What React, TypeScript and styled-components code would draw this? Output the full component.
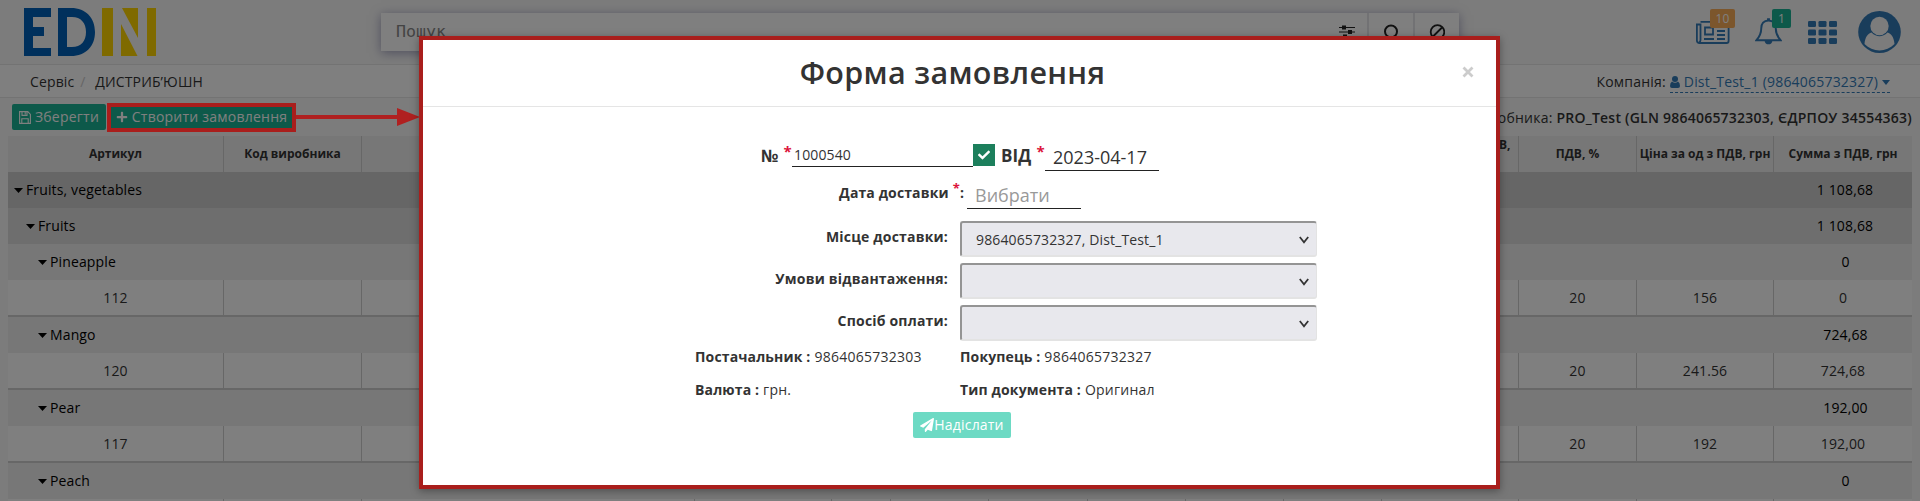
import React from "react";
import styled, { createGlobalStyle, css } from "styled-components";
import { FaPlus, FaUser, FaPaperPlane, FaCheck } from "react-icons/fa";

const Global = createGlobalStyle`
  * { box-sizing: border-box; }
  html, body { margin: 0; height: 501px; overflow: hidden; }
  body { font-family: "Open Sans", "Noto Sans", sans-serif; font-size: 14px; line-height: 20px; letter-spacing: 0.13px; color: #333; background: #f8f8f8; }
`;

const Page = styled.div`
  position: relative;
  width: 1920px;
  height: 501px;
  overflow: hidden;
`;

const Header = styled.header`
  display: flex;
  align-items: flex-start;
  height: 65px;
  border-bottom: 1px solid #e7e7e7;
`;

const Logo = styled.svg`
  flex: none;
  margin: 8px 0 0 24px;
`;

const Search = styled.div`
  display: flex;
  width: 1078px;
  height: 38px;
  margin: 13px 0 0 225px;
  background: #fff;
  box-shadow: 0 2px 10px rgba(90, 90, 140, 0.55);
`;

const SearchText = styled.div`
  flex: 1;
  padding: 9px 15px;
  font-family: "DejaVu Sans Mono", monospace;
  font-size: 16.6px;
  letter-spacing: 0;
  color: #888;
`;

const SearchButton = styled.div<{ $w: number; $line?: boolean }>`
  display: flex;
  align-items: center;
  justify-content: center;
  width: ${(p) => p.$w}px;
  border-left: ${(p) => (p.$line ? "2px solid #e4e4e8" : "0")};
`;

const Tools = styled.div`
  display: flex;
  margin-left: 237px;
  color: #337ab7;
`;

const Tool = styled.div<{ $w: number; $top: number }>`
  position: relative;
  width: ${(p) => p.$w}px;
  padding-top: ${(p) => p.$top}px;
  svg { display: block; }
`;

const Badge = styled.span<{ $bg: string; $left: number; $w: number }>`
  position: absolute;
  top: 9px;
  left: ${(p) => p.$left}px;
  width: ${(p) => p.$w}px;
  height: 19px;
  border-radius: 2px;
  background: ${(p) => p.$bg};
  color: #fff;
  font-size: 12px;
  line-height: 19px;
  text-align: center;
`;

const Crumbs = styled.nav`
  display: flex;
  justify-content: space-between;
  height: 33px;
  padding: 7px 30px 0 30px;
  background: #fff;
  border-bottom: 1px solid #e7e7e7;
`;

const Slash = styled.span`
  padding: 0 6px 0 6px;
  color: #ccc;
`;

const Company = styled.span`
  display: flex;
  gap: 4px;
  letter-spacing: 0.2px;
`;

const CompanyLink = styled.span`
  display: flex;
  align-items: center;
  gap: 4px;
  height: 21px;
  color: #337ab7;
  border-bottom: 1px dashed #337ab7;
`;

const Toolbar = styled.div`
  display: flex;
  justify-content: space-between;
  height: 38px;
  padding: 6px 8px 0 12px;
  letter-spacing: 0.23px;
`;

const Buttons = styled.div`
  display: flex;
  gap: 5px;
`;

const GreenButton = styled.button<{ $w: number }>`
  display: flex;
  align-items: center;
  justify-content: center;
  gap: 4px;
  width: ${(p) => p.$w}px;
  height: 26px;
  padding: 0;
  border: 0;
  border-radius: 2px;
  background: #1ab394;
  color: #fff;
  font: inherit;
  letter-spacing: inherit;
  white-space: nowrap;
`;

const Producer = styled.div`
  padding-top: 4px;
  b { font-weight: 600; }
`;

const Table = styled.div`
  margin: 0 8px;
`;

const Columns = styled.div`
  display: grid;
  grid-template-columns: 216px 138px 333px 137px 59px 98px 99px 98px 98px 98px 137px 118px 137px 138px;
`;

const cell = css`
  display: flex;
  align-items: center;
  justify-content: center;
  border-right: 1px solid #cfcfcf;
  &:last-child { border-right: 0; }
`;

const HeadRow = styled(Columns)`
  height: 36px;
  background: #efefef;
  font-size: 12px;
  line-height: 18px;
  letter-spacing: 0;
  font-weight: 700;
`;

const HeadCell = styled.div`
  ${cell}
  text-align: center;
`;

const GroupRow = styled.div<{ $level: number }>`
  display: flex;
  align-items: center;
  gap: 3px;
  height: 36px;
  padding-left: ${(p) => 6 + p.$level * 12}px;
  background: ${(p) => ["#cdcdcd", "#dddddd", "#eeeeee"][p.$level]};
  color: #000;
`;

const GroupSum = styled.span<{ $level: number }>`
  width: 139px;
  margin-left: auto;
  padding-left: ${(p) => (p.$level === 2 ? 6 : 5)}px;
  text-align: center;
`;

const DataRow = styled(Columns)`
  height: 37px;
  background: #fff;
  border-bottom: 2px solid #cfcfcf;
`;

const DataCell = styled.div`
  ${cell}
`;

const Shade = styled.div`
  position: absolute;
  inset: 0;
  background: rgba(0, 0, 0, 0.5);
`;

const Highlight = styled.div`
  position: absolute;
  left: 107px;
  top: 103px;
  width: 189px;
  height: 29px;
  border: 4px solid #a91e1c;
`;

const Arrow = styled.svg`
  position: absolute;
  left: 296px;
  top: 107px;
`;

const Modal = styled.section`
  position: absolute;
  left: 419px;
  top: 36px;
  width: 1081px;
  height: 453px;
  border: 4px solid #a91e1c;
  background: #fff;
  box-shadow: 0 2px 8px rgba(0, 0, 0, 0.35);
`;

const ModalHead = styled.div`
  display: flex;
  justify-content: center;
  position: relative;
  height: 67px;
  padding: 12px 14px 0 0;
  border-bottom: 1px solid #e5e5e5;
`;

const Title = styled.h1`
  margin: 0;
  font-size: 30.5px;
  line-height: 40px;
  letter-spacing: 0.33px;
  font-weight: 600;
`;

const Close = styled.svg`
  position: absolute;
  right: 22px;
  top: 26px;
`;

const NumberLine = styled.div`
  display: flex;
  height: 38px;
  margin: 37px 0 0 338px;
`;

const BigLabel = styled.span<{ $w: number }>`
  width: ${(p) => p.$w}px;
  padding-top: 2px;
  font-size: 17px;
  font-weight: 700;
  white-space: nowrap;
`;

const Star = styled.sup<{ $gap: number; $size: number }>`
  margin-left: ${(p) => p.$gap}px;
  color: #dc143c;
  font-size: ${(p) => p.$size}px;
  line-height: 0;
  font-weight: 700;
  vertical-align: 5px;
`;

const NumberInput = styled.div`
  width: 181px;
  height: 23px;
  padding: 1px 0 0 2px;
  border-bottom: 1px solid #222;
`;

const CheckBox = styled.div`
  display: flex;
  align-items: center;
  justify-content: center;
  width: 22px;
  height: 22px;
  margin-right: 6px;
  background: #1c7f5c;
  color: #fff;
`;

const DateInput = styled.div<{ $empty?: boolean }>`
  width: 114px;
  height: 27px;
  padding: 3px 0 0 8px;
  border-bottom: 1px solid #222;
  font-size: 18px;
  letter-spacing: 0;
  color: ${(p) => (p.$empty ? "#999" : "#333")};
`;

const DateLine = styled.div`
  display: flex;
  height: 39px;
`;

const DateLabel = styled.div`
  width: 544px;
  padding-right: 3px;
  padding-top: 1px;
  text-align: right;
  font-weight: 700;
`;

const SelectLine = styled.div`
  display: flex;
  height: 42px;
`;

const SelectLabel = styled.div`
  width: 537px;
  padding: 6px 12px 0 0;
  text-align: right;
  font-weight: 700;
  letter-spacing: 0.2px;
`;

const SelectBox = styled.div`
  display: flex;
  align-items: center;
  justify-content: space-between;
  width: 357px;
  height: 36px;
  padding: 1px 7px 0 14px;
  border: 2px solid;
  border-width: 2px 1px 2px 2px;
  border-color: #949494 #e3e3e3 #e3e3e3 #949494;
  border-radius: 3px;
  background: #e8e8ed;
`;

const Facts = styled.div`
  display: grid;
  grid-template-columns: 265px 1fr;
  grid-auto-rows: 33px;
  height: 65px;
  padding: 0 0 0 272px;
  letter-spacing: 0.25px;
  b { letter-spacing: 0.15px; }
`;

const SendButton = styled.button`
  display: flex;
  align-items: center;
  justify-content: center;
  width: 98px;
  height: 26px;
  margin: 0 0 0 490px;
  padding: 0;
  border: 0;
  border-radius: 2px;
  background: #6ddac4;
  color: #fff;
  font: inherit;
  letter-spacing: 0.2px;
`;

const heads = ["Артикул", "Код виробника", "", "", "", "", "", "", "", "", "Ціна за од без ПДВ, грн", "ПДВ, %", "Ціна за од з ПДВ, грн", "Сумма з ПДВ, грн"];

type Item = { code: string; vat: string; price: string; sum: string };
const groups: { name: string; sum: string; level: number; item?: Item }[] = [
  { name: "Fruits, vegetables", sum: "1 108,68", level: 0 },
  { name: "Fruits", sum: "1 108,68", level: 1 },
  { name: "Pineapple", sum: "0", level: 2, item: { code: "112", vat: "20", price: "156", sum: "0" } },
  { name: "Mango", sum: "724,68", level: 2, item: { code: "120", vat: "20", price: "241.56", sum: "724,68" } },
  { name: "Pear", sum: "192,00", level: 2, item: { code: "117", vat: "20", price: "192", sum: "192,00" } },
  { name: "Peach", sum: "0", level: 2, item: { code: "", vat: "", price: "", sum: "" } },
];

const Caret = ({ w = 9 }: { w?: number }) => (
  <svg width={w} height="5" viewBox="0 0 9 5" preserveAspectRatio="none">
    <path d="M0 0h9L4.5 5z" fill="currentColor" />
  </svg>
);

const Chevron = () => (
  <svg width="10" height="8" viewBox="0 0 10 8" fill="none" stroke="#333" strokeWidth="1.8">
    <path d="M.8 1L5 6.2L9.2 1" />
  </svg>
);

const Floppy = () => (
  <svg width="12" height="13" viewBox="0 0 12 13" fill="none" stroke="currentColor" strokeWidth="1.1">
    <path d="M.6 .6h8.2l2.6 2.8v9H.6zM3 .6v3.8h5V.6M2.8 12.4V7.7h6.4v4.7M6.2 1.2v2.2" />
  </svg>
);

export default function App() {
  return (
    <Page>
      <Global />
      <Header>
        <Logo width="132" height="48" viewBox="0 0 132 48">
          <path fill="#0060b9" d="M0 0h27v9H9v10h11v9H9v12h18v8H0z" />
          <path fill="#0060b9" fillRule="evenodd" d="M34 0h13c15 0 24 10 24 24S62 48 47 48H34zM43 9v30h5c9 0 14-6 14-15S57 9 48 9z" />
          <path fill="#ffd400" d="M78 0h11v48H78zM97 16l16.500 32H97zM98 0h16v30zM123 0h9v48h-9z" />
        </Logo>
        <Search>
          <SearchText>Пошук</SearchText>
          <SearchButton $w={41}>
            <svg width="16" height="14" viewBox="0 0 16 14" stroke="#222" fill="#222">
              <path d="M0 2.5h16M0 7h16M0 11.5h16" strokeWidth="1.2" />
              <path stroke="none" d="M3 .5h4v4H3zM9 5h4v4H9zM4 9.500h4v4H4z" />
            </svg>
          </SearchButton>
          <SearchButton $w={46} $line>
            <svg width="16" height="16" viewBox="0 0 16 16" fill="none" stroke="#222" strokeWidth="2">
              <circle cx="8" cy="7.5" r="6" /><path d="M12 12l3.500 3.500" />
            </svg>
          </SearchButton>
          <SearchButton $w={46} $line>
            <svg width="16" height="16" viewBox="0 0 16 16" fill="none" stroke="#222" strokeWidth="1.8">
              <circle cx="8.5" cy="8" r="6.8" /><path d="M4 12.500l9-9" />
            </svg>
          </SearchButton>
        </Search>
        <Tools>
          <Tool $w={59} $top={21}>
            <svg width="34" height="23" viewBox="0 0 34 23" fill="none" stroke="currentColor" strokeWidth="1.8">
              <path d="M4.500 .9H31q1.600 0 1.600 1.600V20q0 2-2 2H3.500q-2.600 0-2.600-2.500V3.500H4.500V19q0 2-1.500 2.500" />
              <path d="M9 6.500h8v7H9zM21 10h8M21 14h8M8 18h10M21 18h8M21 6h8" />
            </svg>
            <Badge $bg="#f8ac59" $left={14} $w={25}>10</Badge>
          </Tool>
          <Tool $w={53} $top={17}>
            <svg width="27" height="29" viewBox="0 0 28 29" fill="none" stroke="currentColor" strokeWidth="2">
              <path d="M14 3c-5 0-7.500 3.500-7.500 8 0 6-2 9-5 12.500h25C23.500 20 21.500 17 21.500 11c0-4.500-2.500-8-7.500-8z" />
              <path d="M12.500 3V.8h3V3zM10 24h8c0 5-8 5-8 0z" fill="currentColor" stroke="none" />
            </svg>
            <Badge $bg="#1ab394" $left={17} $w={19}>1</Badge>
          </Tool>
          <Tool $w={50} $top={21}>
            <svg width="29" height="23" viewBox="0 0 29 23" fill="currentColor">
              {[0, 8.5, 17].map((y) => [0, 10.5, 21].map((x) => <rect key={x + "-" + y} x={x} y={y} width="8" height="6" rx="1.3" />))}
            </svg>
          </Tool>
          <Tool $w={43} $top={11}>
            <svg width="43" height="42" viewBox="0 0 43 42">
              <ellipse cx="21.5" cy="21" rx="21.3" ry="21" fill="currentColor" />
              <path d="M6.500 33C7 26 10 22.500 13.500 21.500c5 5 11 5 16 0C33 22.500 36 26 36.500 33c-8 8.500-22 8.500-30 0z" fill="#f8f8f8" />
              <circle cx="21.5" cy="15" r="9.2" fill="#f8f8f8" />
            </svg>
          </Tool>
        </Tools>
      </Header>
      <Crumbs>
        <span>Сервіс<Slash>/</Slash> ДИСТРИБ’ЮШН</span>
        <Company>
          Компанія:
          <CompanyLink>
            <svg width="10" height="12" viewBox="0 0 10 12" fill="currentColor">
              <circle cx="5" cy="3" r="3" />
              <path d="M2 5.500Q5 8 8 5.500Q10 6.500 10 10Q10 12 8 12H2Q0 12 0 10Q0 6.500 2 5.500z" />
            </svg>
            Dist_Test_1 (9864065732327)
            <Caret w={8} />
          </CompanyLink>
        </Company>
      </Crumbs>
      <Toolbar>
        <Buttons>
          <GreenButton $w={94}><Floppy />Зберегти</GreenButton>
          <GreenButton $w={181}><FaPlus size={12} />Створити замовлення</GreenButton>
        </Buttons>
        <Producer>GLN виробника: <b>PRO_Test (GLN 9864065732303, ЄДРПОУ 34554363)</b></Producer>
      </Toolbar>
      <Table>
        <HeadRow>
          {heads.map((h, i) => <HeadCell key={i}>{h}</HeadCell>)}
        </HeadRow>
        {groups.map((g) => (
          <React.Fragment key={g.name}>
            <GroupRow $level={g.level}>
              <Caret />{g.name}
              <GroupSum $level={g.level}>{g.sum}</GroupSum>
            </GroupRow>
            {g.item && (
              <DataRow>
                {heads.map((_, i) => (
                  <DataCell key={i}>{({ 0: g.item!.code, 11: g.item!.vat, 12: g.item!.price, 13: g.item!.sum } as Record<number, string>)[i]}</DataCell>
                ))}
              </DataRow>
            )}
          </React.Fragment>
        ))}
      </Table>
      <Shade />
      <Highlight />
      <Arrow width="126" height="20" viewBox="0 0 126 20">
        <path d="M0 8h101V1l23 9-23 9v-7H0z" fill="#b02020" />
      </Arrow>
      <Modal>
        <ModalHead>
          <Title>Форма замовлення</Title>
          <Close width="12" height="12" viewBox="0 0 12 12" stroke="#ccc" strokeWidth="2.8">
            <path d="M1.500 1.500l9 9M10.500 1.500l-9 9" />
          </Close>
        </ModalHead>
        <NumberLine>
          <BigLabel $w={31}>№<Star $gap={5} $size={15}>*</Star></BigLabel>
          <NumberInput>1000540</NumberInput>
          <CheckBox><FaCheck size={12} /></CheckBox>
          <BigLabel $w={44}>ВІД<Star $gap={5} $size={15}>*</Star></BigLabel>
          <DateInput>2023-04-17</DateInput>
        </NumberLine>
        <DateLine>
          <DateLabel>Дата доставки<Star $gap={4} $size={13}>*</Star>:</DateLabel>
          <DateInput $empty>Вибрати</DateInput>
        </DateLine>
        <SelectLine><SelectLabel>Місце доставки:</SelectLabel><SelectBox>9864065732327, Dist_Test_1<Chevron /></SelectBox></SelectLine>
        <SelectLine><SelectLabel>Умови відвантаження:</SelectLabel><SelectBox><span /><Chevron /></SelectBox></SelectLine>
        <SelectLine><SelectLabel>Спосіб оплати:</SelectLabel><SelectBox><span /><Chevron /></SelectBox></SelectLine>
        <Facts>
          <span><b>Постачальник :</b> 9864065732303</span>
          <span><b>Покупець :</b> 9864065732327</span>
          <span><b>Валюта :</b> грн.</span>
          <span><b>Тип документа :</b> Оригинал</span>
        </Facts>
        <SendButton><FaPaperPlane size={14} />Надіслати</SendButton>
      </Modal>
    </Page>
  );
}
